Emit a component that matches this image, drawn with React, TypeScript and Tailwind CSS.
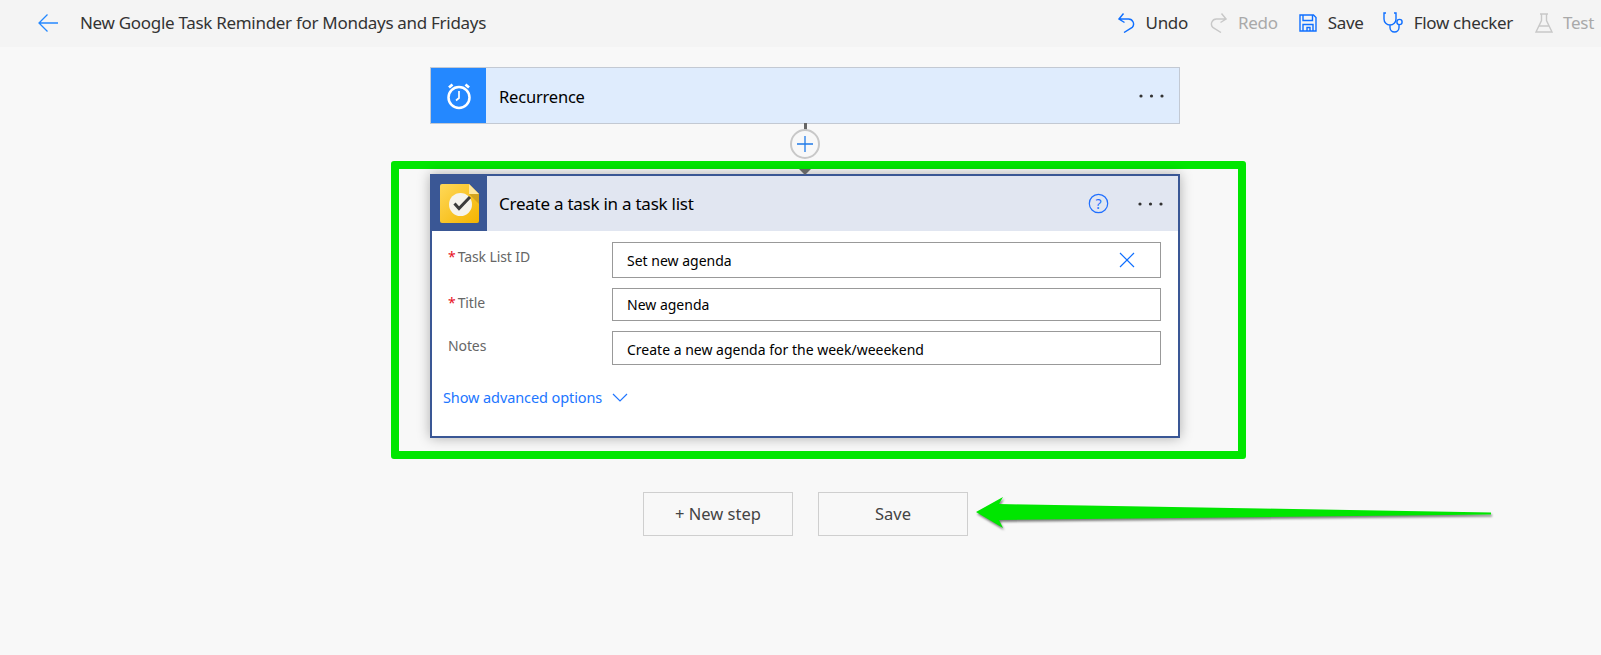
import React from "react";

const Tool = ({ icon, label, disabled, className }: { icon: React.ReactNode; label: string; disabled?: boolean; className: string }) => (
  <div className={`flex items-center ${className}`}>
    {icon}
    <span className={disabled ? "text-[#a9a9a9]" : "text-[#333333]"}>{label}</span>
  </div>
);

const Dots = () => (
  <svg width="26" height="4" viewBox="0 0 26 4" className="block">
    <circle cx="2" cy="2" r="1.6" fill="#333" />
    <circle cx="12.5" cy="2" r="1.6" fill="#333" />
    <circle cx="23" cy="2" r="1.6" fill="#333" />
  </svg>
);

const Field = ({ label, required, value, children, rowClass, boxClass, labelClass, valueClass }: { label: string; required?: boolean; value: string; children?: React.ReactNode; rowClass: string; boxClass: string; labelClass: string; valueClass: string }) => (
  <div className={`flex items-start ${rowClass}`}>
    <div className={`w-[164px] shrink-0 text-[14px] tracking-[-0.1px] leading-5 text-[#666666] ${labelClass}`}>
      {required && <span className="text-[#e81123] mr-[2px]">*</span>}
      {label}
    </div>
    <div className={`w-[549px] border border-[#999999] bg-white flex items-center justify-between pl-[14px] pr-[25px] text-[14px] text-black ${boxClass}`}>
      <span className={valueClass}>{value}</span>
      {children}
    </div>
  </div>
);

export default function App() {
  return (
    <div className="relative min-h-screen bg-[#f8f8f8] font-['Noto_Sans','Open_Sans',sans-serif] overflow-hidden">
      <header className="h-[47px] pb-[2px] box-border bg-[#f4f4f4] flex items-center text-[17px] tracking-[-0.3px]">
        <svg width="20" height="18" viewBox="0 0 20 18" fill="none" stroke="#2488ff" strokeWidth="1.3" className="ml-[38px]">
          <path d="M20 9H1M9.5 .5L1 9l8.5 8.5" />
        </svg>
        <h1 className="ml-[22px] text-[#333333] font-normal">New Google Task Reminder for Mondays and Fridays</h1>
        <div className="ml-auto flex items-center">
          <Tool
            className=""
            label="Undo"
            icon={
              <svg width="17" height="21" viewBox="0 0 17 21" fill="none" stroke="#0f6fff" strokeWidth="1.4" className="mr-[11px]">
                <path d="M1 7h9.5a5 5 0 0 1 3.7 8.4L6 20.5M5.5 1.5L1 7l5.5 3.5" />
              </svg>
            }
          />
          <Tool
            className="ml-[22px]"
            label="Redo"
            disabled
            icon={
              <svg width="17" height="21" viewBox="0 0 17 21" fill="none" stroke="#c8c8c8" strokeWidth="1.4" className="mr-[11px]">
                <path d="M16 7H6.500a5 5 0 0 0-3.700 8.400L11 20.500M11.500 1.500L16 7l-5.500 3.500" />
              </svg>
            }
          />
          <Tool
            className="ml-[21px]"
            label="Save"
            icon={
              <svg width="18" height="18" viewBox="0 0 18 18" fill="none" stroke="#0f6fff" strokeWidth="1.4" className="mr-[11px]">
                <path d="M1 1h13.500L17 3.500V17H1zM4 1v5.500h9.500V1M4 17v-6.500h10V17M8 17v-3.500h3V17" />
              </svg>
            }
          />
          <Tool
            className="ml-[19px]"
            label="Flow checker"
            icon={
              <svg width="21" height="21" viewBox="0 0 21 21" fill="none" stroke="#0f6fff" strokeWidth="1.4" className="mr-[10px]">
                <path d="M3 1H1v6a6 6 0 0 0 12 0V1h-2M7 13v2.500a4.500 4.500 0 0 0 9 0V13" />
                <circle cx="16.500" cy="10" r="2.600" />
              </svg>
            }
          />
          <Tool
            className="ml-[22px] mr-[7px]"
            label="Test"
            disabled
            icon={
              <svg width="18" height="20" viewBox="0 0 18 20" fill="none" stroke="#c8c8c8" strokeWidth="1.4" className="mr-[10px]">
                <path d="M5 1h8M6.500 1v6.500L1 19h16L11.500 7.500V1M4 13h10" />
              </svg>
            }
          />
        </div>
      </header>

      <main className="pt-[20px]">
        <div className="ml-[430px] w-[750px] h-[57px] border border-[#c3c9d3] bg-[#dfecfd] flex items-center box-border">
          <div className="w-[55px] h-full bg-[#2488ff] flex items-center justify-center shrink-0">
            <svg width="26" height="28" viewBox="0 0 26 28" fill="none" stroke="#fff" strokeWidth="2.500">
              <circle cx="13" cy="15.500" r="10.500" />
              <path d="M13 9v7l-3 2.500" strokeWidth="1.700" />
              <path d="M3 5.500L6.500 2.500M23 5.500L19.500 2.500" strokeWidth="2.800" />
            </svg>
          </div>
          <span className="ml-[13px] mt-[3px] text-[16.500px] text-black tracking-[-0.2px]">Recurrence</span>
          <div className="ml-auto mr-[14px]">
            <Dots />
          </div>
        </div>

        <div className="relative ml-[391px] mt-[37px] w-[855px] h-[298px] border-[8px] border-[#00e600] rounded-[3px] pl-[31px] pt-[5px] box-border">
          <div className="w-[750px] h-[264px] border-2 border-[#3a5795] bg-white shadow-[0_0_12px_rgba(0,0,0,0.3)] box-border">
            <div className="h-[55px] bg-[#e1e6f1] flex items-center">
              <div className="w-[55px] h-full bg-[#3a5795] flex items-center justify-center shrink-0 -ml-[2px] -mt-[2px] pt-[1px] pl-[2px] box-content">
                <svg width="39" height="39" viewBox="0 0 39 39">
                  <defs>
                    <linearGradient id="tasksGrad" x1="0" y1="0" x2="1" y2="1">
                      <stop offset="0" stopColor="#ffd858" />
                      <stop offset="1" stopColor="#f4b400" />
                    </linearGradient>
                  </defs>
                  <path d="M2 0H29L39 10V37a2 2 0 0 1-2 2H2a2 2 0 0 1-2-2V2a2 2 0 0 1 2-2z" fill="url(#tasksGrad)" />
                  <path d="M29 0L39 10H29z" fill="#ffe8a0" />
                  <path d="M29 10H39V20z" fill="#c79a1e" opacity="0.75" />
                  <circle cx="20.500" cy="20.500" r="11.500" fill="#f5f3ec" />
                  <path d="M14.500 19.500L19 24.500L30 13" fill="none" stroke="#3c3c3c" strokeWidth="3" />
                </svg>
              </div>
              <span className="ml-[12px] text-[17px] text-black tracking-[-0.25px]">Create a task in a task list</span>
              <svg width="21" height="21" viewBox="0 0 21 21" className="ml-auto mr-[29px]" fill="none" stroke="#1f6fff" strokeWidth="1.200">
                <circle cx="10.500" cy="10.500" r="9.200" />
                <text x="10.500" y="15.500" textAnchor="middle" fontSize="14" fill="#1f6fff" stroke="none" fontFamily="Noto Sans">?</text>
              </svg>
              <div className="mr-[14px]">
                <Dots />
              </div>
            </div>

            <div className="pl-[16px]">
              <Field label="Task List ID" required value="Set new agenda" rowClass="mt-[11px]" boxClass="h-[36px]" labelClass="pt-[5px]" valueClass="pt-[1px]">
                <svg width="16" height="16" viewBox="0 0 16 16" fill="none" stroke="#0f6fff" strokeWidth="1.200">
                  <path d="M1 1l14 14M15 1L1 15" />
                </svg>
              </Field>
              <Field label="Title" required value="New agenda" rowClass="mt-[10px]" boxClass="h-[33px]" labelClass="pt-[5px]" valueClass="pb-[1px]" />
              <Field label="Notes" value="Create a new agenda for the week/weeekend" rowClass="mt-[10px]" boxClass="h-[34px]" labelClass="pt-[5px]" valueClass="pt-[2px]" />
            </div>

            <div className="ml-[11px] mt-[22px] flex items-center text-[14.500px] text-[#2176ff] tracking-[-0.1px]">
              <span>Show advanced options</span>
              <svg width="16" height="9" viewBox="0 0 16 9" fill="none" stroke="#2176ff" strokeWidth="1.200" className="ml-[10px]">
                <path d="M1 1l7 7 7-7" />
              </svg>
            </div>
          </div>
        </div>

        <div className="ml-[643px] mt-[33px] flex gap-[25px] text-[16.500px] text-[#444444]">
          <button className="w-[150px] h-[44px] border border-[#cfcfcf] bg-[#f8f8f8]">+ New step</button>
          <button className="w-[150px] h-[44px] border border-[#cfcfcf] bg-[#f8f8f8]">Save</button>
        </div>
      </main>

      {/* connector between the two steps */}
      <div className="absolute left-[804px] top-[123px] w-[3px] h-[8px] bg-[#666666]" />
      <div className="absolute left-[790px] top-[129px] w-[30px] h-[30px] rounded-full border-2 border-[#c8c8c8] bg-[#f8f8f8] flex items-center justify-center">
        <svg width="16" height="16" viewBox="0 0 16 16" stroke="#1f7ae8" strokeWidth="1.300">
          <path d="M8 0v16M0 8h16" />
        </svg>
      </div>
      <div className="absolute left-[799px] top-[169px] w-0 h-0 border-x-[6px] border-x-transparent border-t-[6px] border-t-[#666666]" />

      {/* annotation arrow */}
      <svg width="530" height="45" viewBox="970 490 530 45" className="absolute left-[970px] top-[490px] drop-shadow-[1px_2px_1px_rgba(0,0,0,0.5)]">
        <polygon points="976,512 1003,497 999,504 1491,512.500 1491,514.500 999,520 1003,528" fill="#00e600" />
      </svg>
    </div>
  );
}
